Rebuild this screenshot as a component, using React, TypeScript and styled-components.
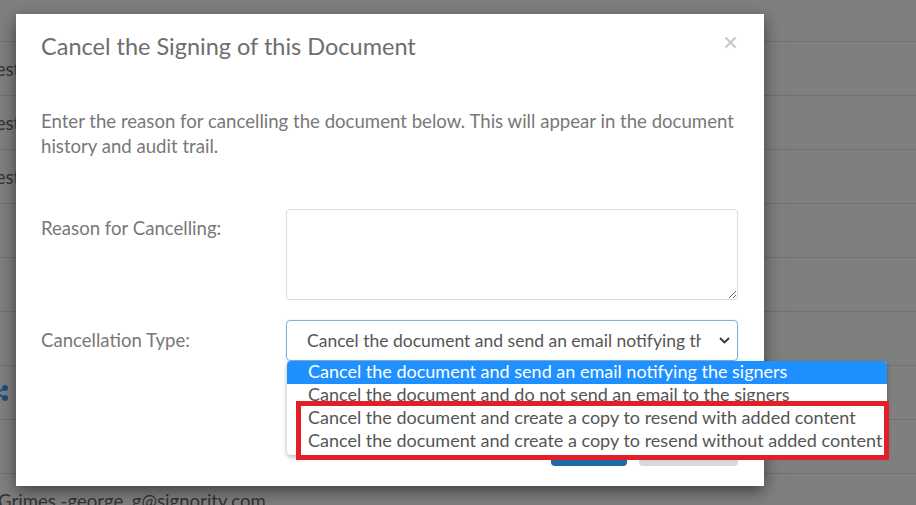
import React from 'react'
import styled, { createGlobalStyle } from 'styled-components'

const GlobalStyle = createGlobalStyle`
  html, body {
    margin: 0;
    padding: 0;
    background: #7f7f7f;
  }
  body {
    font-family: Lato, "Open Sans", sans-serif;
    overflow: hidden;
  }
`

const Page = styled.div`
  position: relative;
  width: 916px;
  height: 505px;
  overflow: hidden;
  background: #7f7f7f;
`

const BackList = styled.div`
  display: flex;
  flex-direction: column;
`

const BackRow = styled.div<{ first?: boolean }>`
  height: ${({ first }) => (first ? 41 : 53)}px;
  border-bottom: 1px solid #707070;
  display: flex;
  align-items: center;
  font-size: 18.6px;
  color: #333;
  white-space: nowrap;
`

const BackText = styled.span<{ shift: number }>`
  margin-left: ${({ shift }) => shift}px;
`

const ShareIcon = styled.svg`
  margin-left: -8px;
  color: #1c4f7c;
`

const Overlay = styled.div`
  position: absolute;
  inset: 0;
  padding: 14px 0 0 16px;
`

const Modal = styled.div`
  width: 748px;
  height: 472px;
  box-sizing: border-box;
  background: #fff;
  box-shadow: 0 5px 15px rgba(0, 0, 0, 0.5);
  display: flex;
  flex-direction: column;
`

const Header = styled.div`
  display: flex;
  justify-content: space-between;
  align-items: flex-start;
  padding: 17px 25px 0;
`

const Title = styled.h4`
  margin: 0;
  font-size: 23.5px;
  line-height: 31px;
  font-weight: 400;
  color: #6e6e6e;
`

const CloseButton = styled.button`
  border: 0;
  background: none;
  padding: 0;
  margin: 5px 2px 0 0;
  width: 13px;
  height: 13px;
  display: flex;
  cursor: pointer;
`

const Body = styled.div`
  padding: 0 26px 0 25px;
`

const Intro = styled.p`
  margin: 47px 0 0;
  font-size: 18.6px;
  line-height: 25px;
  color: #787878;
`

const Form = styled.div`
  margin-top: 50px;
  display: flex;
  flex-direction: column;
  gap: 20px;
`

const FormRow = styled.div<{ top?: boolean }>`
  display: grid;
  grid-template-columns: 245px 452px;
  align-items: ${({ top }) => (top ? 'start' : 'center')};
`

const Label = styled.label<{ offset?: number }>`
  font-size: 18.6px;
  line-height: 25px;
  color: #787878;
  padding-top: ${({ offset }) => offset || 0}px;
`

const TextArea = styled.textarea`
  box-sizing: border-box;
  width: 452px;
  height: 91px;
  border: 1px solid #dcdcdc;
  border-radius: 4px;
  font-family: inherit;
  font-size: 17px;
  outline: none;
`

const SelectWrap = styled.div`
  position: relative;
`

const SelectBox = styled.div`
  box-sizing: border-box;
  height: 41px;
  border: 1px solid #7fb3d8;
  border-radius: 4px;
  box-shadow: 0 0 2px rgba(102, 175, 233, 0.35);
  display: flex;
  align-items: center;
  padding: 0 7px 0 20px;
  font-size: 17.5px;
  color: #555;
`

const SelectValue = styled.span`
  flex: 1;
  overflow: hidden;
  white-space: nowrap;
  margin-right: 18px;
`

const OptionList = styled.div`
  position: absolute;
  top: 41px;
  left: 1px;
  width: 600px;
  padding-bottom: 2px;
  background: #fff;
  border-radius: 4px;
  box-shadow: 0 2px 5px rgba(0, 0, 0, 0.3);
  z-index: 2;
`

const Option = styled.div<{ active?: boolean }>`
  height: 23px;
  line-height: 20px;
  padding-left: 21px;
  font-size: 18px;
  white-space: nowrap;
  color: ${({ active }) => (active ? '#fff' : '#555')};
  background: ${({ active }) => (active ? '#1e90ff' : 'transparent')};
  border-radius: ${({ active }) => (active ? '4px 4px 0 0' : '0')};
`

const Highlight = styled.div`
  position: absolute;
  left: 9px;
  top: 40px;
  width: 593px;
  height: 59px;
  box-sizing: border-box;
  border: 5px solid #e31e26;
  pointer-events: none;
`

const Footer = styled.div`
  margin-top: auto;
  display: flex;
  justify-content: flex-end;
  gap: 12px;
  padding: 0 26px 20px 0;
`

const Button = styled.button<{ primary?: boolean }>`
  height: 36px;
  width: ${({ primary }) => (primary ? 76 : 99)}px;
  border: 0;
  border-radius: 4px;
  font-family: inherit;
  font-size: 16px;
  color: ${({ primary }) => (primary ? '#fff' : '#555')};
  background: ${({ primary }) => (primary ? '#1c6aa8' : '#d9d9d9')};
`

const options = [
  'Cancel the document and send an email notifying the signers',
  'Cancel the document and do not send an email to the signers',
  'Cancel the document and create a copy to resend with added content',
  'Cancel the document and create a copy to resend without added content',
]

const App: React.FC = () => {
  return (
    <Page>
      <GlobalStyle />
      <BackList>
        <BackRow first />
        <BackRow><BackText shift={-13}>Test</BackText></BackRow>
        <BackRow><BackText shift={-13}>Test</BackText></BackRow>
        <BackRow><BackText shift={-13}>Test</BackText></BackRow>
        <BackRow />
        <BackRow />
        <BackRow />
        <BackRow>
          <ShareIcon width="16" height="16" viewBox="0 0 16 16">
            <g stroke="currentColor" strokeWidth="2">
              <line x1="4" y1="8" x2="13" y2="3" />
              <line x1="4" y1="8" x2="13" y2="13" />
            </g>
            <circle cx="3" cy="8" r="3" fill="currentColor" />
            <circle cx="13" cy="3" r="3" fill="currentColor" />
            <circle cx="13" cy="13" r="3" fill="currentColor" />
          </ShareIcon>
        </BackRow>
        <BackRow />
        <BackRow><BackText shift={-2}>Grimes -george_g@signority.com</BackText></BackRow>
      </BackList>

      <Overlay>
        <Modal>
          <Header>
            <Title>Cancel the Signing of this Document</Title>
            <CloseButton aria-label="Close">
              <svg width="13" height="13" viewBox="0 0 13 13">
                <path d="M1.5 1.5 L11.5 11.5 M11.5 1.5 L1.5 11.5" stroke="#c6c6c6" strokeWidth="2" />
              </svg>
            </CloseButton>
          </Header>
          <Body>
            <Intro>
              Enter the reason for cancelling the document below. This will appear in the document
              history and audit trail.
            </Intro>
            <Form>
              <FormRow top>
                <Label offset={7}>Reason for Cancelling:</Label>
                <TextArea />
              </FormRow>
              <FormRow>
                <Label>Cancellation Type:</Label>
                <SelectWrap>
                  <SelectBox>
                    <SelectValue>{options[0]}</SelectValue>
                    <svg width="11" height="7" viewBox="0 0 11 7">
                      <path d="M1 1 L5.5 5.5 L10 1" fill="none" stroke="#333" strokeWidth="1.8" />
                    </svg>
                  </SelectBox>
                  <OptionList>
                    {options.map((o, i) => (
                      <Option key={o} active={i === 0}>{o}</Option>
                    ))}
                    <Highlight />
                  </OptionList>
                </SelectWrap>
              </FormRow>
            </Form>
          </Body>
          <Footer>
            <Button primary>OK</Button>
            <Button>Cancel</Button>
          </Footer>
        </Modal>
      </Overlay>
    </Page>
  )
}

export default App
